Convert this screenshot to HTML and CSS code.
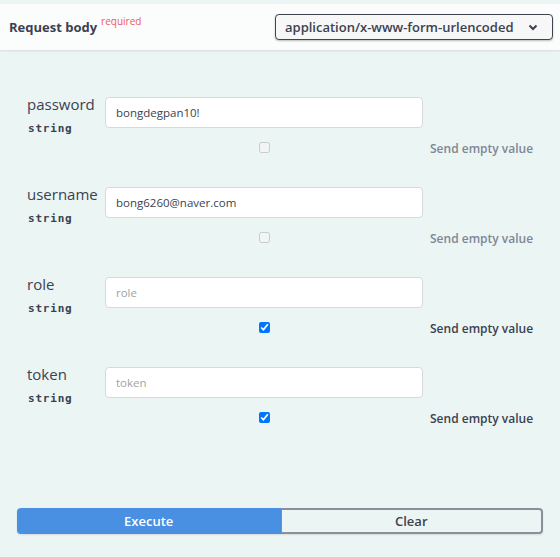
FILE: index.html
```html
<!DOCTYPE html>
<html>
<head>
<meta charset="utf-8">
<link rel="stylesheet" href="styles.css">
</head>
<body>
<div class="section">
  <div class="header">
    <div class="title">Request body <sup class="req">required</sup></div>
    <div class="select">
      <span>application/x-www-form-urlencoded</span>
      <svg class="chev" width="10" height="7" viewBox="0 0 10 7"><path d="M1.5 1.5 L5 5 L8.5 1.5" fill="none" stroke="#3b4151" stroke-width="2"/></svg>
    </div>
  </div>
  <div class="params">
    <div class="param">
      <div class="pname"><div class="n">password</div><div class="t">string</div></div>
      <input class="field" type="text" value="bongdegpan10!">
      <div class="cbcell"><input type="checkbox" class="cb" disabled></div>
      <div class="sev disabled">Send empty value</div>
    </div>
    <div class="param">
      <div class="pname"><div class="n">username</div><div class="t">string</div></div>
      <input class="field" type="text" value="bong6260@naver.com">
      <div class="cbcell"><input type="checkbox" class="cb" disabled></div>
      <div class="sev disabled">Send empty value</div>
    </div>
    <div class="param">
      <div class="pname"><div class="n">role</div><div class="t">string</div></div>
      <input class="field" type="text" placeholder="role">
      <div class="cbcell"><input type="checkbox" class="cb" checked></div>
      <div class="sev">Send empty value</div>
    </div>
    <div class="param">
      <div class="pname"><div class="n">token</div><div class="t">string</div></div>
      <input class="field" type="text" placeholder="token">
      <div class="cbcell"><input type="checkbox" class="cb" checked></div>
      <div class="sev">Send empty value</div>
    </div>
  </div>
  <div class="actions">
    <button class="btn execute">Execute</button>
    <button class="btn clear">Clear</button>
  </div>
</div>
</body>
</html>
```
FILE: styles.css
```css
html, body {
  margin: 0;
  padding: 0;
}
body {
  background: #ebf5f4;
  font-family: "Open Sans", "Noto Sans", sans-serif;
  color: #3b4151;
  padding-top: 4px;
  height: 553px;
  overflow: hidden;
}
.header {
  height: 46px;
  background: #fbfdfd;
  box-shadow: 0 1px 2px rgba(0,0,0,0.1);
  display: flex;
  align-items: center;
  justify-content: space-between;
  padding: 0 7px 0 9px;
}
.title {
  font-size: 13px;
  font-weight: 700;
  color: #3b4151;
  display: flex;
  align-items: flex-start;
}
.req {
  font-size: 10px;
  font-weight: 400;
  color: #ef5a5a;
  margin-left: 4px;
  margin-top: -3px;
  vertical-align: baseline;
  line-height: 12px;
}
.select {
  box-sizing: border-box;
  width: 278px;
  height: 26px;
  border: 1px solid #41444e;
  border-radius: 4px;
  box-shadow: 0 1px 2px rgba(0,0,0,0.25);
  background: #f7f7f7;
  display: flex;
  align-items: center;
  justify-content: space-between;
  padding: 0 14px 0 9px;
  font-size: 13px;
  font-weight: 600;
}
.chev { display: block; }
.params {
  padding: 47px 0 0 27px;
}
.param {
  display: grid;
  grid-template-columns: 78px 318px 1fr;
  grid-template-rows: 31px 20px;
  row-gap: 10px;
  margin-bottom: 29px;
}
.pname {
  grid-row: 1 / 3;
  grid-column: 1;
}
.n {
  font-size: 15px;
  line-height: 20px;
  margin-top: -3px;
}
.t {
  font-family: "DejaVu Sans Mono", monospace;
  font-weight: 700;
  font-size: 11px;
  line-height: 16px;
  letter-spacing: 0.8px;
  margin-top: 7px;
  margin-left: 1px;
}
.field {
  grid-row: 1;
  grid-column: 2;
  box-sizing: border-box;
  width: 318px;
  height: 31px;
  border: 1px solid #d9d9d9;
  border-radius: 4px;
  background: #fff;
  padding: 0 10px;
  margin: 0;
  font-family: "Open Sans", "Noto Sans", sans-serif;
  font-size: 11.5px;
  color: #3b4151;
  outline: none;
}
.field::placeholder {
  color: #a2a2a2;
}
.cbcell {
  grid-row: 2;
  grid-column: 2;
  display: flex;
  align-items: center;
  justify-content: center;
}
.cb {
  width: 11px;
  height: 11px;
  margin: -2px 0 0 0;
}
.sev {
  grid-row: 2;
  grid-column: 3;
  padding-left: 7px;
  display: flex;
  align-items: center;
  font-size: 12px;
  font-weight: 600;
  color: #3b4151;
  white-space: nowrap;
}
.sev.disabled {
  color: #7f8794;
}
.actions {
  display: flex;
  margin: 80px 17px 0 17px;
}
.btn {
  flex: 1;
  height: 26px;
  box-sizing: border-box;
  font-family: "Open Sans", "Noto Sans", sans-serif;
  font-size: 13px;
  font-weight: 600;
  box-shadow: 0 1px 2px rgba(0,0,0,0.1);
  margin: 0;
  padding: 0;
}
.execute {
  background: #4990e2;
  color: #fff;
  border: 2px solid #4990e2;
  border-radius: 4px 0 0 4px;
}
.clear {
  background: transparent;
  color: #3b4151;
  border: 2px solid #8a8f98;
  border-left-width: 1px;
  border-radius: 0 4px 4px 0;
}
```
